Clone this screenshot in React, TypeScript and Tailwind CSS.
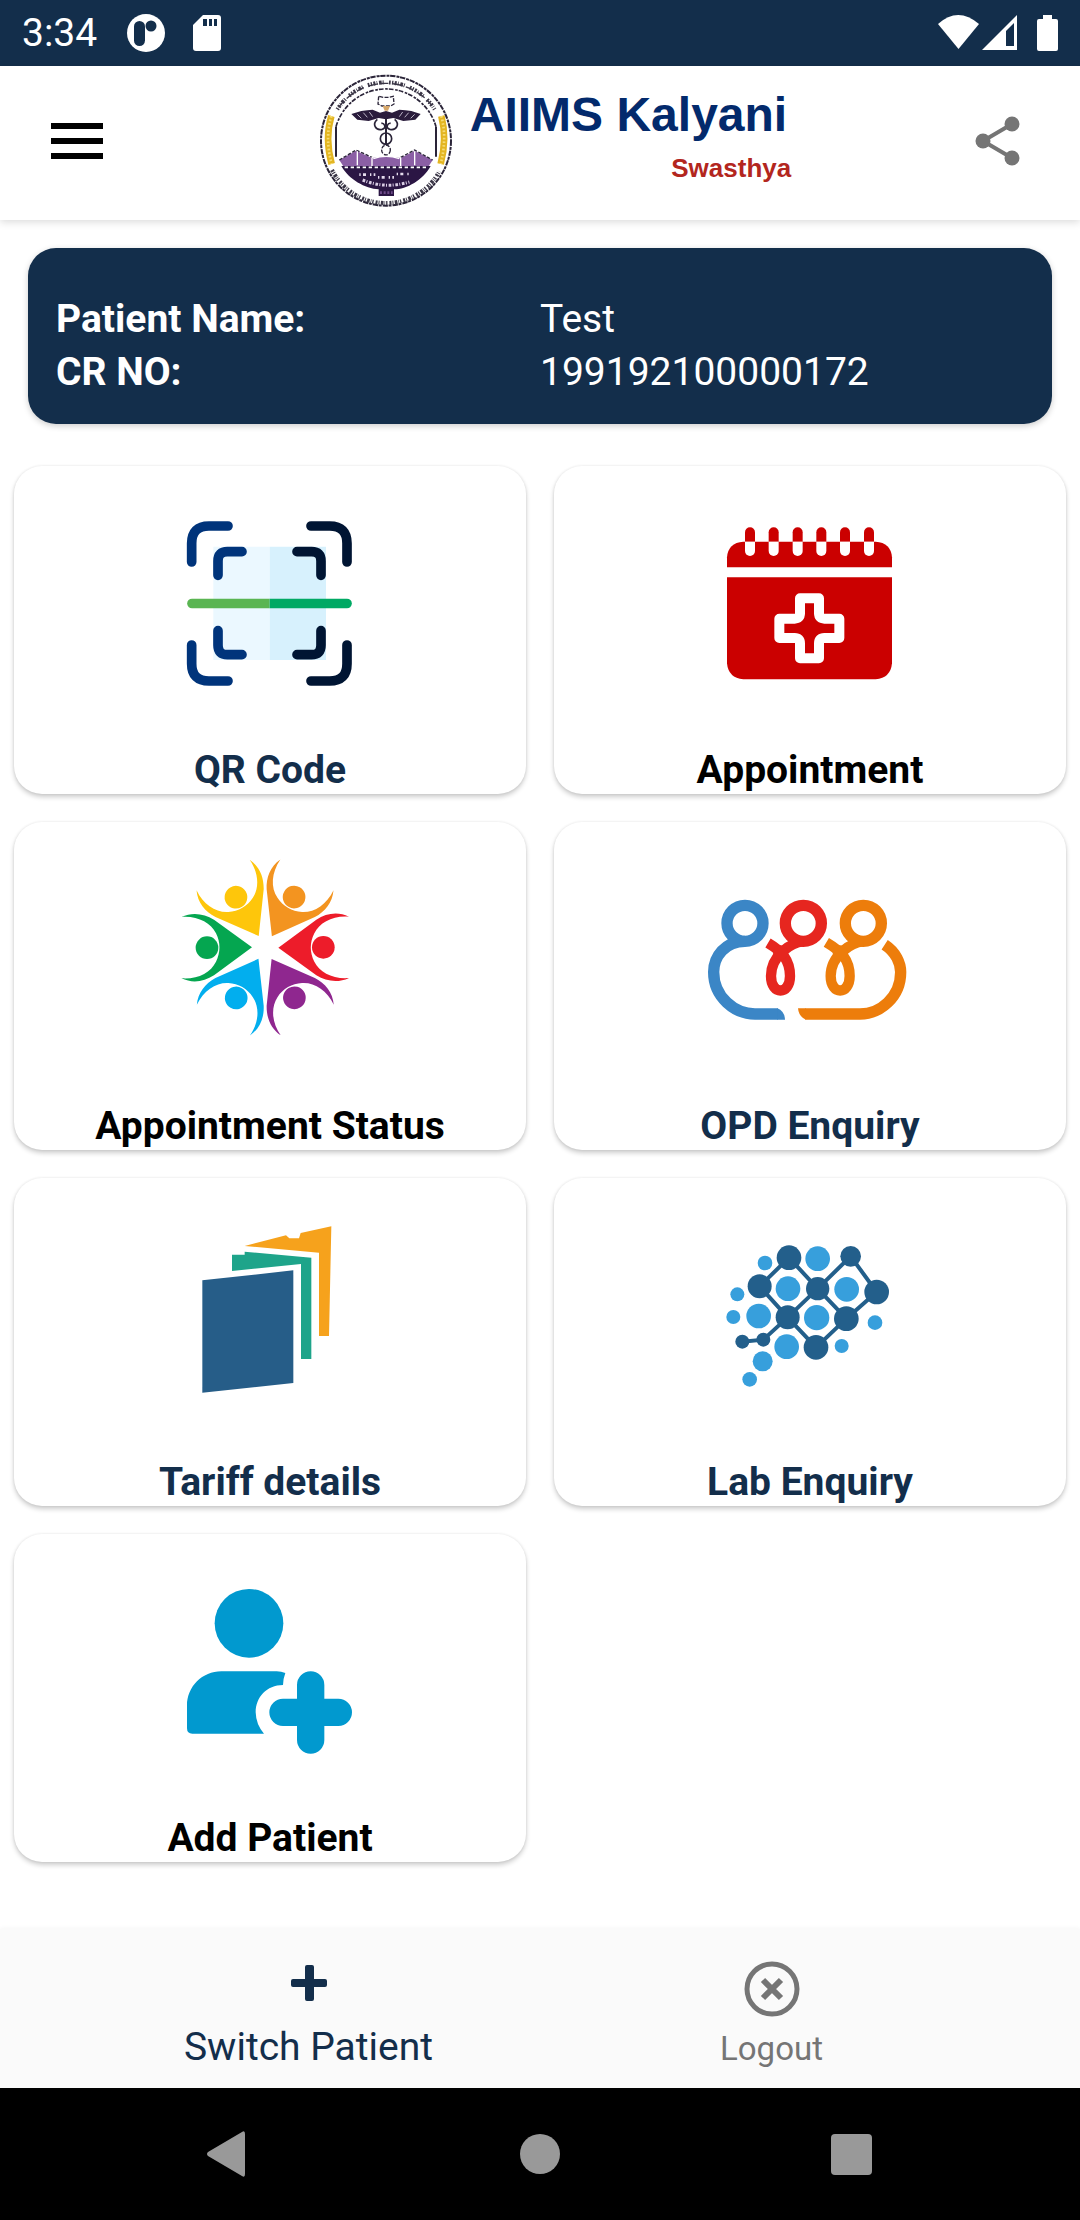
import React from 'react';

const Emblem: React.FC = () => (
  <svg className="h-[134px] w-[134px] shrink-0" viewBox="57 42 402 402" fill="none" aria-hidden="true">
    <circle cx="258" cy="242" r="195" stroke="#2a2438" strokeWidth="6" strokeDasharray="16 3 9 2" />
    <path d="M108 290 V200 M408 290 V200" stroke="#2a2438" strokeWidth="6" />
    <path d="M108 200 A156 156 0 0 1 408 200" stroke="#2a2438" strokeWidth="5" strokeDasharray="14 5 8 3" />
    {/* lettering around the ring */}
    <path d="M112 148 A172 172 0 0 1 404 148" stroke="#3a3646" strokeWidth="12" strokeDasharray="4 4 6 4 2 5 8 3 3 16 5 4" />
    <path d="M116 142 A176 176 0 0 1 400 142" stroke="#3a3646" strokeWidth="4" strokeDasharray="22 14 30 9" />
    <path d="M96 330 A182 182 0 0 0 418 334" stroke="#3a3646" strokeWidth="12" strokeDasharray="6 3 3 4 8 3 2 3 4 6" />
    <path d="M94 168 Q74 235 95 312" stroke="#e3b521" strokeWidth="20" />
    <path d="M424 168 Q442 235 422 312" stroke="#e3b521" strokeWidth="20" />
    <path d="M94 168 Q74 235 95 312 M424 168 Q442 235 422 312" stroke="#f6dc74" strokeWidth="8" strokeDasharray="5 6" />
    {/* caduceus */}
    <path d="M236 109 L234 132 L246 138 H272 L282 132 L280 109 L266 112 H250Z" stroke="#2a2438" strokeWidth="4" strokeDasharray="12 4" />
    <path d="M248 138 h22 l-6 14 h-10Z" fill="#d6a76a" />
    <path d="M154 162 L184 153 L202 151 L218 149 L240 158 L258 153 L276 158 L298 149 L316 151 L334 153 L362 162 L346 179 L310 183 L280 174 L258 178 L236 174 L206 183 L172 179Z" fill="#2a1c3c" />
    <path d="M172 163 l12 12 M190 158 l12 14 M208 156 l10 14 M344 163 l-12 12 M326 158 l-12 14 M308 156 l-10 14" stroke="#b9b2c4" strokeWidth="3" />
    <path d="M232 178 C216 192 226 212 246 208 C262 204 252 188 244 190 M284 178 C300 192 290 212 270 208 C254 204 264 188 272 190" stroke="#2a2438" strokeWidth="5" />
    <path d="M258 176 V280" stroke="#2a2438" strokeWidth="6" />
    <ellipse cx="258" cy="236" rx="17" ry="17" stroke="#2a2438" strokeWidth="5" />
    <ellipse cx="258" cy="270" rx="13" ry="15" fill="#fff" stroke="#2a2438" strokeWidth="4" strokeDasharray="12 4" />
    {/* hills and river */}
    <path d="M118 300 L168 272 L216 294 L258 288 L302 294 L344 272 L398 300 L384 322 H132Z" fill="#8b5fa5" />
    <path d="M118 300 L168 270 L216 292 M302 292 L344 270 L398 300" stroke="#2a2438" strokeWidth="4" strokeDasharray="10 5" />
    <path d="M172 274 V316 M216 292 V318 M302 292 V318 M344 274 V316 M220 296 Q258 282 298 296" stroke="#fff" strokeWidth="4" />
    <path d="M124 318 H392 C370 360 320 388 282 388 V408 H236 V388 C196 386 146 358 124 318Z" fill="#2b1644" />
    <path d="M134 322 H386" stroke="#fff" strokeWidth="5" strokeDasharray="10 8" />
    <path d="M178 344 H226 M234 352 H282 M290 342 H328" stroke="#e5dced" strokeWidth="8" strokeDasharray="4 7 9 12" />
    <path d="M188 360 Q256 388 328 366" stroke="#d9cde4" strokeWidth="9" strokeDasharray="8 4 3 5" />
    <path d="M240 398 H278" stroke="#6d4a88" strokeWidth="8" strokeDasharray="6 5" />
  </svg>
);

const iconSize = 'h-[240px] w-[220px]';

const QrIcon: React.FC = () => (
  <svg className={iconSize} viewBox="0 -48 660 720" fill="none" strokeLinecap="round" strokeWidth="29" aria-hidden="true">
    <path d="M160 140 H329 V480 H160Z" fill="#ebf8ff" />
    <path d="M329 140 H498 V480 H329Z" fill="#d7f1fd" />
    <g stroke="#00347b">
      <path d="M95 186 V130 Q95 78 147 78 H204" />
      <path d="M95 435 V491 Q95 543 147 543 H204" />
      <path d="M174 226 V183 Q174 155 202 155 H246" />
      <path d="M174 392 V436 Q174 464 202 464 H246" />
    </g>
    <g stroke="#001533">
      <path d="M561 186 V130 Q561 78 509 78 H453" />
      <path d="M561 435 V491 Q561 543 509 543 H453" />
      <path d="M483 226 V183 Q483 155 455 155 H411" />
      <path d="M483 392 V436 Q483 464 455 464 H411" />
    </g>
    <path d="M329 296 H96 A14.500 14.500 0 0 0 96 325 H329Z" fill="#5ab552" />
    <path d="M329 296 H561 A14.500 14.500 0 0 1 561 325 H329Z" fill="#00a964" />
  </svg>
);

const CalendarIcon: React.FC = () => (
  <svg className={iconSize} viewBox="0 -48 660 720" fill="none" aria-hidden="true">
    <path d="M81 202 V172 Q84 128 130 125 H527 Q573 128 576 172 V202Z" fill="#cb0000" />
    <path d="M81 232 H576 V490 Q572 534 527 538 H130 Q85 534 81 490Z" fill="#cb0000" />
    {[150, 221, 293, 364, 435, 507].map((x) => (
      <g key={x}>
        <path d={`M${x - 15} 125 V97 a15 15 0 0 1 30 0 V125Z`} fill="#cb0000" />
        <path d={`M${x - 15} 125 V153 a15 15 0 0 0 30 0 V125Z`} fill="#fff" />
      </g>
    ))}
    <path
      d="M300 295 H357 V340 Q357 356 373 356 H418 V414 H373 Q357 414 357 430 V475 H300 V430 Q300 414 284 414 H238 V356 H284 Q300 356 300 340Z"
      stroke="#fff"
      strokeWidth="30"
      strokeLinejoin="round"
    />
  </svg>
);

const people = [
  { angle: 0, color: '#05a650' },
  { angle: 60, color: '#fec60b' },
  { angle: 120, color: '#f39420' },
  { angle: 180, color: '#ed1c2a' },
  { angle: 240, color: '#8f278f' },
  { angle: 300, color: '#02aeee' },
];

const PeopleIcon: React.FC = () => (
  <svg className={iconSize} viewBox="0 0 660 720" aria-hidden="true">
    {people.map(({ angle, color }) => (
      <g key={angle} transform={`rotate(${angle} 315.500 322.500)`} fill={color}>
        <path d="M64 231 C98 215 132 221 162 239 L276 322 L162 406 C132 425 98 431 64 415 C112 419 152 398 168 365 C182 338 182 307 168 280 C152 248 112 227 64 231Z" />
        <circle cx="141" cy="323" r="34" />
      </g>
    ))}
  </svg>
);

const QueueIcon: React.FC = () => (
  <svg className={iconSize} viewBox="30 -90 660 720" fill="none" strokeWidth="34" aria-hidden="true">
    <g stroke="#3b86c6">
      <circle cx="165" cy="160" r="54" />
      <path d="M165 214 C105 214 71 260 71 306 C71 382 135 432 195 432 H264" />
    </g>
    <path d="M262 415 Q284 424 285 449 H262Z" fill="#3b86c6" />
    <g stroke="#e6261f">
      <circle cx="340" cy="160" r="54" />
      <path d="M340 214 C306 216 243 256 243 318 C243 376 300 376 300 318 C300 270 276 244 234 219" strokeWidth="31" />
    </g>
    <circle cx="271" cy="248" r="22" fill="#e6261f" />
    <g stroke="#ed7d0b">
      <circle cx="520" cy="160" r="54" />
      <path d="M520 214 C486 216 422 256 422 318 C422 376 479 376 479 318 C479 270 455 244 409 217" strokeWidth="31" />
      <path d="M584 224 C618 246 632 280 632 306 C632 382 570 432 510 432 H346" />
    </g>
    <circle cx="450" cy="248" r="22" fill="#ed7d0b" />
    <path d="M348 415 H324 Q326 440 348 449Z" fill="#ed7d0b" />
  </svg>
);

const FoldersIcon: React.FC = () => (
  <svg className={iconSize} viewBox="-60 -12 660 720" aria-hidden="true">
    <path d="M194 138 L318 106 L328 115 H357 L362 99 L454 79 L447 408 H417 V158Z" fill="#f6a21c" />
    <path d="M156 164 H194 V155 L394 173 V477 H363 V192 L156 213Z" fill="#1ea48a" />
    <path d="M67 241 L340 211 V549 L67 578Z" fill="#265d88" />
  </svg>
);

const darkNodes = [
  [267, 113, 37], [179, 199, 36], [353, 206, 35], [452, 109, 31], [530, 216, 37],
  [263, 292, 36], [439, 296, 37], [348, 382, 37], [190, 359, 21], [127, 365, 21],
];

const lightNodes = [
  [353, 116, 37], [195, 129, 22], [264, 206, 37], [440, 208, 37], [112, 223, 21],
  [176, 288, 37], [100, 291, 21], [350, 293, 38], [525, 308, 22], [260, 380, 37],
  [425, 378, 21], [188, 424, 30], [149, 478, 22],
];

const LabIcon: React.FC = () => (
  <svg className={iconSize} viewBox="0 -72 660 720" aria-hidden="true">
    <path
      d="M179 199 L267 113 L353 206 L452 109 L530 216 L439 296 L348 382 L263 292 L179 199 M353 206 L439 296 M353 206 L263 292 L190 359 L127 365"
      fill="none"
      stroke="#235f8b"
      strokeWidth="12"
    />
    {lightNodes.map(([x, y, r]) => (
      <circle key={`${x}-${y}`} cx={x} cy={y} r={r} fill="#379fdc" />
    ))}
    {darkNodes.map(([x, y, r]) => (
      <circle key={`${x}-${y}`} cx={x} cy={y} r={r} fill="#235f8b" />
    ))}
  </svg>
);

const AddPatientIcon: React.FC = () => (
  <svg className={iconSize} viewBox="0 -24 660 720" fill="#0199cf" aria-hidden="true">
    <circle cx="267" cy="190" r="103" />
    <path d="M184 334 H350 Q364 334 376 339 Q370 354 369 375 C320 375 287 412 287 457 Q288 494 312 521 H97 Q81 521 81 505 V437 C81 380 127 334 184 334Z" />
    <path d="M411 375 a41 41 0 0 1 82 0 V416 H535 a41 41 0 0 1 0 82 H493 V540 a41 41 0 0 1 -82 0 V498 H369 a41 41 0 0 1 0 -82 H411Z" />
  </svg>
);

const tiles = [
  { label: 'QR Code', color: 'text-[#132e4b]', Icon: QrIcon },
  { label: 'Appointment', color: 'text-black', Icon: CalendarIcon },
  { label: 'Appointment Status', color: 'text-black', Icon: PeopleIcon },
  { label: 'OPD Enquiry', color: 'text-[#132e4b]', Icon: QueueIcon },
  { label: 'Tariff details', color: 'text-[#132e4b]', Icon: FoldersIcon },
  { label: 'Lab Enquiry', color: 'text-[#132e4b]', Icon: LabIcon },
  { label: 'Add Patient', color: 'text-black', Icon: AddPatientIcon },
];

const StatusBar: React.FC = () => (
  <div className="flex h-[66px] items-center bg-[#132e4b] px-[22px] text-white">
    <span className="text-[39px] leading-[46px]">3:34</span>
    <svg className="ml-[29px] h-[40px] w-[40px]" viewBox="0 0 40 40" aria-hidden="true">
      <circle cx="20" cy="20" r="19" fill="#fff" />
      <rect x="8" y="8" width="11" height="25" rx="5.500" fill="#132e4b" />
      <circle cx="25" cy="13" r="5.500" fill="#132e4b" />
    </svg>
    <svg className="ml-[27px] h-[36px] w-[28px]" viewBox="0 0 28 36" aria-hidden="true">
      <path d="M10 0 H25 Q28 0 28 3 V33 Q28 36 25 36 H3 Q0 36 0 33 V10Z" fill="#fff" />
      <path d="M10 4 h4 v7 h-4Z M16 4 h3 v7 h-3Z M21 4 h3 v7 h-3Z" fill="#132e4b" />
    </svg>
    <svg className="ml-auto h-[36px] w-[41px]" viewBox="0 0 41 36" fill="#fff" aria-hidden="true">
      <path d="M0 9 Q20 -9 41 9 L20.500 34Z" />
    </svg>
    <svg className="ml-[3px] h-[36px] w-[35px]" viewBox="0 0 35 36" aria-hidden="true">
      <path d="M35 0 V35 H0Z" fill="#fff" />
      <path d="M24 16 L32 8 V31 H24Z" fill="#132e4b" />
    </svg>
    <svg className="ml-[20px] h-[36px] w-[21px]" viewBox="0 0 21 36" fill="#fff" aria-hidden="true">
      <path d="M6 0 H15 V4 H19 Q21 4 21 6 V34 Q21 36 19 36 H2 Q0 36 0 34 V6 Q0 4 2 4 H6Z" />
    </svg>
  </div>
);

const Header: React.FC = () => (
  <header className="flex h-[154px] items-center justify-between bg-white pr-[60px] pb-[4px] pl-[51px] shadow-[0_2px_8px_rgba(0,0,0,0.15)]">
    <button type="button" aria-label="Menu" className="flex w-[84px] py-[24px]">
      <svg className="h-[36px] w-[52px]" viewBox="0 0 52 36" aria-hidden="true">
        <path d="M0 0 H52 V6 H0Z M0 15 H52 V21 H0Z M0 30 H52 V36 H0Z" />
      </svg>
    </button>
    <div className="flex h-full gap-[17px] font-[family-name:'Liberation_Sans',Arial,sans-serif] font-bold">
      <div className="flex items-center">
        <Emblem />
      </div>
      <div className="pt-[25px]">
        <h1 className="pr-[4px] text-[48px] leading-[48px] whitespace-nowrap text-[#032a6c]">AIIMS Kalyani</h1>
        <p className="mt-[14px] text-right text-[26px] leading-[30px] text-[#b3261e]">Swasthya</p>
      </div>
    </div>
    <button type="button" aria-label="Share">
      <svg className="h-[50px] w-[45px]" viewBox="0 0 45 50" fill="#757575" aria-hidden="true">
        <path d="M37 8 L8 25 L37 42" fill="none" stroke="#757575" strokeWidth="4" />
        <circle cx="37" cy="8" r="7.500" />
        <circle cx="8" cy="25" r="7.500" />
        <circle cx="37" cy="42" r="7.500" />
      </svg>
    </button>
  </header>
);

const PatientCard: React.FC = () => (
  <dl className="mx-[28px] mt-[28px] grid grid-cols-2 rounded-[28px] bg-[#132e4b] px-[28px] pt-[45px] pb-[25px] text-[39px] leading-[53px] text-white shadow-[0_2px_6px_rgba(0,0,0,0.2)]">
    <dt className="font-bold">Patient Name:</dt>
    <dd>Test</dd>
    <dt className="font-bold">CR NO:</dt>
    <dd>199192100000172</dd>
  </dl>
);

const App: React.FC = () => {
  return (
    <div className="flex min-h-screen flex-col bg-white font-[family-name:Roboto,sans-serif]">
      <StatusBar />
      <Header />
      <main className="flex-1 pb-[67px]">
        <PatientCard />
        <div className="mt-[42px] grid grid-cols-2 gap-[28px] px-[14px]">
          {tiles.map(({ label, color, Icon }) => (
            <button
              key={label}
              type="button"
              className="flex flex-col items-center rounded-[28px] bg-white pt-[18px] pb-px shadow-[0_3px_5px_rgba(0,0,0,0.2),0_0_3px_rgba(0,0,0,0.08)]"
            >
              <Icon />
              <span className={`mt-[23px] text-[39px] leading-[46px] font-bold ${color}`}>{label}</span>
            </button>
          ))}
        </div>
      </main>
      <nav className="flex h-[159px] bg-[#fafafa] px-[77px] shadow-[0_-1px_4px_rgba(0,0,0,0.04)]">
        <button type="button" className="flex flex-1 flex-col items-center pt-[32px] text-[#132e4b]">
          <svg className="h-[44px] w-[44px]" viewBox="0 0 44 44" fill="currentColor" aria-hidden="true">
            <path d="M20 4 H25 Q27 4 27 6 V18 H38 Q40 18 40 20 V24 Q40 26 38 26 H27 V38 Q27 40 25 40 H20 Q18 40 18 38 V26 H6 Q4 26 4 24 V20 Q4 18 6 18 H18 V6 Q18 4 20 4Z" />
          </svg>
          <span className="mt-[19px] text-[39px] leading-[46px]">Switch Patient</span>
        </button>
        <button type="button" className="flex flex-1 flex-col items-center pt-[32px] text-[#757575]">
          <svg className="h-[56px] w-[56px]" viewBox="0 0 56 56" fill="none" stroke="currentColor" aria-hidden="true">
            <circle cx="28" cy="28" r="25" strokeWidth="5" />
            <path d="M19 19 L37 37 M37 19 L19 37" strokeWidth="6" />
          </svg>
          <span className="mt-[12px] text-[33px] leading-[40px]">Logout</span>
        </button>
      </nav>
      <div className="flex h-[132px] items-center bg-black px-[73px]">
        <button type="button" aria-label="Back" className="flex flex-1 justify-center">
          <svg className="h-[46px] w-[44px]" viewBox="0 0 44 46" fill="#999" aria-hidden="true">
            <path d="M35 1 Q38 -1 38 3 V43 Q38 47 35 45 L1 25 Q-1 23 1 21Z" />
          </svg>
        </button>
        <button type="button" aria-label="Home" className="flex flex-1 justify-center">
          <span className="h-[40px] w-[40px] rounded-full bg-[#999]" />
        </button>
        <button type="button" aria-label="Recent apps" className="flex flex-1 justify-center">
          <span className="h-[41px] w-[41px] rounded-[4px] bg-[#999]" />
        </button>
      </div>
    </div>
  );
};

export default App;
